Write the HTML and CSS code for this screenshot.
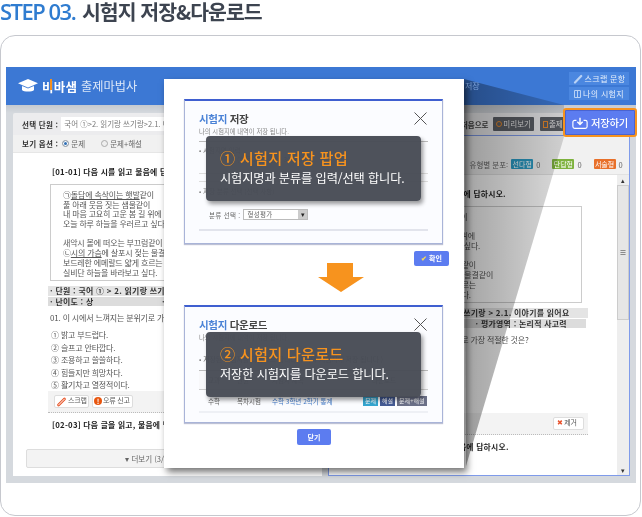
FILE: index.html
```html
<!DOCTYPE html>
<html lang="ko">
<head>
<meta charset="utf-8">
<title>STEP 03</title>
<link rel="stylesheet" href="styles.css">
</head>
<body>
<h1 class="step"><span class="step-no">STEP 03.</span> <span class="step-name">시험지 저장&amp;다운로드</span></h1>
<section class="card">
  <div class="app">
    <header class="app-head">
      <div class="brand">
        <svg class="cap" viewBox="0 0 20 15" width="20" height="15"><path d="M10 0 20 4.200 16 6v5c-1.500 2-10.500 2-12 0V6L0 4.200z" fill="#fff"/><path d="M4 6.500 10 9l6-2.500" fill="none" stroke="#3c78d4" stroke-width=".9"/></svg>
        <span class="brand-a"><span class="brand-v">비</span>바샘</span>
        <span class="brand-b">출제마법사</span>
      </div>
      <div class="head-links">
        <a class="head-link"><svg width="10" height="10" viewBox="0 0 10 10"><path d="M2 8.500 8.200 2" stroke="#b9d2f5" stroke-width="2.200" stroke-linecap="round"/></svg>스크랩 문항</a>
        <a class="head-link"><svg width="7" height="8" viewBox="0 0 7 8"><path d="M.5.5h6v7h-6zM3.500.5v7" fill="none" stroke="#b9d2f5"/></svg>나의 시험지</a>
      </div>
    </header>
    <div class="work">
      <div class="toolbar">
        <b class="tool-label">선택 단원 :</b>
        <span class="unit-input">국어 ①&gt;2. 읽기랑 쓰기랑&gt;2.1. 이야기를 읽어요</span>
        <span class="tool-actions">
          <span class="tool-first">· 처음으로</span>
          <span class="tool-btn"><i class="glass"></i>미리보기</span>
          <span class="tool-btn"><i class="book"></i>출제 정보</span>
        </span>
      </div>
      <div class="panels">
        <div class="panel panel-left">
          <div class="panel-bar options">
            <b class="tool-label">보기 옵션 :</b>
            <span class="radio"><i class="dot on"></i>문제</span>
            <span class="radio"><i class="dot"></i>문제+해설</span>
          </div>
          <div class="scroll">
            <article class="paper">
              <p class="q-head">[01-01] 다음 시를 읽고 물음에 답하시오.</p>
              <div class="passage">
                <p>㉠<u>돌담에 속삭이는 햇발</u>같이</p>
                <p>풀 아래 웃음 짓는 샘물같이</p>
                <p>내 마음 고요히 고운 봄 길 위에</p>
                <p class="stanza">오늘 하루 하늘을 우러르고 싶다.</p>
                <p>새악시 볼에 떠오는 부끄럼같이</p>
                <p>㉡<u>시의 가슴</u>에 살포시 젖는 물결같이</p>
                <p>보드레한 에메랄드 얇게 흐르는</p>
                <p>실비단 하늘을 바라보고 싶다.</p>
              </div>
              <p class="meta">· 단원 : 국어 ① &gt; 2. 읽기랑 쓰기랑 &gt; 2.1. 이야기를 읽어요</p>
              <p class="meta meta-b">· 난이도 : 상 <span class="meta-r">· 평가영역 : 논리적 사고력</span></p>
              <p class="question">01. 이 시에서 느껴지는 분위기로 가장 적절한 것은?</p>
              <ol class="choices">
                <li>① 밝고 부드럽다.</li>
                <li>② 슬프고 안타깝다.</li>
                <li>③ 조용하고 쓸쓸하다.</li>
                <li>④ 힘들지만 희망차다.</li>
                <li>⑤ 활기차고 열정적이다.</li>
              </ol>
              <div class="band">
                <span class="mini-btn mini-scrap"><svg width="11" height="11" viewBox="0 0 11 11"><path d="M2.500 9 8.500 3" stroke="#e8562a" stroke-width="2.800" stroke-linecap="round"/><path d="M2.500 9 8.500 3" stroke="#fff" stroke-width="1" stroke-linecap="round"/></svg>스크랩</span>
                <span class="mini-btn mini-err"><i class="alert">!</i>오류 신고</span>
                <span class="mini-btn mini-x"><i class="x">✖</i>제거</span>
              </div>
              <p class="q-head q-next">[02-03] 다음 글을 읽고, 물음에 답하시오.</p>
            </article>
          </div>
          <div class="more">▾ 더보기 (3/10)</div>
        </div>
        <div class="panel panel-right">
          <div class="panel-bar dist">
            <span>유형별 분포:</span>
            <span class="count"><i class="tag tag-a">선다형</i>0</span>
            <span class="count"><i class="tag tag-b">단답형</i>0</span>
            <span class="count"><i class="tag tag-c">서술형</i>0</span>
          </div>
          <div class="scroller">
            <article class="paper">
              <p class="q-head">[01-01] 다음 시를 읽고 물음에 답하시오.</p>
              <div class="passage">
                <p>㉠<u>돌담에 속삭이는 햇발</u>같이</p>
                <p>풀 아래 웃음 짓는 샘물같이</p>
                <p>내 마음 고요히 고운 봄 길 위에</p>
                <p class="stanza">오늘 하루 하늘을 우러르고 싶다.</p>
                <p>새악시 볼에 떠오는 부끄럼같이</p>
                <p>㉡<u>시의 가슴</u>에 살포시 젖는 물결같이</p>
                <p>보드레한 에메랄드 얇게 흐르는</p>
                <p>실비단 하늘을 바라보고 싶다.</p>
              </div>
              <p class="meta">· 단원 : 국어 ① &gt; 2. 읽기랑 쓰기랑 &gt; 2.1. 이야기를 읽어요</p>
              <p class="meta meta-b">· 난이도 : 상 <span class="meta-r">· 평가영역 : 논리적 사고력</span></p>
              <p class="question">01. 이 시에서 느껴지는 분위기로 가장 적절한 것은?</p>
              <ol class="choices">
                <li>① 밝고 부드럽다.</li>
                <li>② 슬프고 안타깝다.</li>
                <li>③ 조용하고 쓸쓸하다.</li>
                <li>④ 힘들지만 희망차다.</li>
                <li>⑤ 활기차고 열정적이다.</li>
              </ol>
              <div class="band">
                <span class="mini-btn mini-scrap"><svg width="11" height="11" viewBox="0 0 11 11"><path d="M2.500 9 8.500 3" stroke="#e8562a" stroke-width="2.800" stroke-linecap="round"/></svg>스크랩</span>
                <span class="mini-btn mini-err"><i class="alert">!</i>오류 신고</span>
                <span class="mini-btn mini-x"><i class="x">✖</i>제거</span>
              </div>
              <p class="q-head q-next">[02-03] 다음 글을 읽고, 물음에 답하시오.</p>
            </article>
            <div class="scrollbar">
              <span class="sb-arrow">▴</span>
              <span class="sb-thumb">≡</span>
              <span class="sb-arrow sb-down">▾</span>
            </div>
          </div>
        </div>
      </div>
    </div>

    <svg class="wedge" width="630" height="416" viewBox="0 0 630 416">
      <defs>
        <linearGradient id="wedge-fill" x1="0" x2="1" y1="0" y2="0">
          <stop offset="0" stop-color="#000" stop-opacity=".36"/>
          <stop offset="1" stop-color="#000" stop-opacity=".14"/>
        </linearGradient>
      </defs>
      <polygon points="458,12 558,38 558,70 460,399" fill="url(#wedge-fill)"/>
    </svg>
    <span class="ghost-save">저장</span>

    <button class="save-btn">
      <svg width="16" height="12" viewBox="0 0 18 13"><path d="M5 3.500H3a2 2 0 0 0-2 2v5a2 2 0 0 0 2 2h12a2 2 0 0 0 2-2v-5a2 2 0 0 0-2-2h-2" fill="none" stroke="#fff" stroke-width="1.300"/><path d="M9 .5v7M6 5l3 3.200L12 5" fill="none" stroke="#fff" stroke-width="1.600"/></svg>
      저장하기
    </button>

    <div class="popup">
      <div class="dialog dialog-save">
        <h2 class="dlg-title"><span class="accent">시험지</span> 저장</h2>
        <p class="dlg-sub">나의 시험지에 내역이 저장 됩니다.</p>
        <svg class="dlg-close" width="13" height="13" viewBox="0 0 13 13"><path d="M.5.5l12 12M12.500.5l-12 12" stroke="#555" stroke-width="1"/></svg>
        <div class="form-block">
          <p class="form-row">• 시험지명 입력</p>
          <p class="form-hint">(한글 20자, 영문 30자 이내)</p>
        </div>
        <div class="form-block form-second">
          <p class="form-row">• 저장 분류 선택 (선택 사항)</p>
          <div class="select-row">
            <span>분류 선택 :</span>
            <span class="select">형성평가<i class="select-arrow">▾</i></span>
          </div>
        </div>
        <div class="tip tip-one">
          <p class="tip-title">① 시험지 저장 팝업</p>
          <p class="tip-text">시험지명과 분류를 입력/선택 합니다.</p>
        </div>
      </div>
      <span class="blue-btn btn-ok"><i class="check">✔</i>확인</span>
      <svg class="arrow" width="46" height="29" viewBox="0 0 46 29"><path d="M9 0h26v14h11L23 29 0 14h9z" fill="#f7931e"/></svg>
      <div class="dialog dialog-down">
        <h2 class="dlg-title"><span class="accent">시험지</span> 다운로드</h2>
        <p class="dlg-sub">나의 시험지에 내역이 저장 됩니다.</p>
        <svg class="dlg-close" width="13" height="13" viewBox="0 0 13 13"><path d="M.5.5l12 12M12.500.5l-12 12" stroke="#555" stroke-width="1"/></svg>
        <p class="down-note">• 저장된 시험지를 다운로드 합니다. ( 나의 시험지에 저장 됩니다 )</p>
        <div class="down-head"><span class="c1">교과</span><span class="c2">단원</span><span class="c3">시험지 제목</span><span class="c4">다운로드</span></div>
        <div class="down-row">
          <span class="c1">수학</span><span class="c2">목차시험</span><span class="c3 link">수학 3학년 2학기 통계</span>
          <span class="badges"><i class="badge b1">문제</i><i class="badge b2">해설</i><i class="badge b3">문제+해설</i></span>
        </div>
        <div class="tip tip-two">
          <p class="tip-title">② 시험지 다운로드</p>
          <p class="tip-text">저장한 시험지를 다운로드 합니다.</p>
        </div>
      </div>
      <span class="blue-btn btn-close">닫기</span>
    </div>
  </div>
</section>
</body>
</html>
```

FILE: styles.css
```css
* { box-sizing: border-box; }
html, body { margin: 0; padding: 0; }
body {
  width: 642px; height: 517px; overflow: hidden; background: #fff;
  font-family: "Noto Sans CJK KR", "Noto Sans", sans-serif; color: #333;
}
p, h1, h2, ol { margin: 0; padding: 0; font-weight: normal; }
i { font-style: normal; }
ol { list-style: none; }

.step { height: 35px; padding-top: 0; font-size: 20.500px; line-height: 23px; white-space: nowrap; letter-spacing: -1px; font-weight: 700; filter: blur(.3px); }
.step-no { font-family: "Open Sans", sans-serif; font-weight: 600; color: #2f7cd0; font-size: 22px; letter-spacing: -1.500px; }
.step-name { color: #3d4450; margin-left: 2px; }

.card {
  width: 641px; height: 481px; border: 1px solid #c6c8ce; border-radius: 15px;
  padding: 31px 0 0 5px;
}
.app { position: relative; width: 630px; height: 416px; filter: blur(.4px); display: flex; flex-direction: column; }

.app-head {
  height: 38px; flex: none; background: #3c78d4; display: flex; align-items: center;
  justify-content: space-between; padding: 0 7px 0 12px;
}
.brand { display: flex; align-items: center; gap: 3px; color: #fff; }
.cap { margin-right: 1px; }
.brand-a { font-size: 12.500px; font-weight: 700; letter-spacing: .2px; }
.brand-v { position: relative; }
.brand-v::after { content: ""; position: absolute; left: 8px; top: 2px; width: 2px; height: 11px; background: #f39020; }
.brand-b { font-size: 12.200px; color: #dbe7f8; margin-left: 1px; }
.head-links { display: flex; flex-direction: column; gap: 2px; }
.head-link {
  width: 60px; height: 13px; background: #4b87e0; color: #e6effb; font-size: 8px; line-height: 13px;
  display: flex; align-items: center; justify-content: center; gap: 2px; letter-spacing: .3px;
}

.work { flex: 1; background: linear-gradient(#c4c9d0, #d5d9de 8px); padding: 8px 6px 7px 7px; display: flex; flex-direction: column; min-height: 0; }
.toolbar {
  height: 22px; flex: none; display: flex; align-items: center; background: #ececee; padding: 0 9px;
  border-radius: 2px 2px 0 0; font-size: 7.500px; white-space: nowrap;
}
.tool-label { font-weight: 700; color: #333; letter-spacing: .3px; }
.unit-input { width: 240px; height: 14px; background: #fff; margin-left: 3px; padding-left: 3px; line-height: 14px; color: #777; overflow: hidden; }
.tool-actions { margin-left: 155px; display: flex; align-items: center; gap: 6px; }
.tool-first { width: 31px; font-weight: 700; color: #444; }
.tool-btn { height: 14px; padding: 0 3px; background: #5b5f66; color: #e6e6e6; line-height: 14px; display: flex; align-items: center; gap: 1px; border-radius: 1px; }
.glass { width: 6px; height: 6px; border: 1.300px solid #e98a2c; border-radius: 50%; }
.book { width: 5px; height: 7px; border: 1px solid #e98a2c; }

.panels { flex: 1; display: flex; gap: 6px; min-height: 0; }
.panel { position: relative; background: #fff; display: flex; flex-direction: column; min-width: 0; overflow: hidden; }
.panel-left { width: 309px; }
.panel-right { width: 303px; border: 1px solid #7f9bea; }
.panel-bar { flex: none; background: #f1f1f1; font-size: 7.500px; display: flex; align-items: center; }
.options { height: 18px; padding-left: 9px; gap: 4px; border-bottom: 1px solid #e6e6e6; }
.radio { display: flex; align-items: center; gap: 2px; color: #666; margin-right: 12px; }
.dot { width: 7px; height: 7px; border: 1px solid #aaa; border-radius: 50%; background: #eee; }
.dot.on { background: #2f6fb5; box-shadow: inset 0 0 0 1px #fff; }

.scroll { flex: 1; min-height: 0; overflow: hidden; }
.paper { width: 226px; font-size: 8px; line-height: 9.700px; letter-spacing: -.18px; color: #555; flex: none; white-space: nowrap; }
.panel-left .paper { margin-left: 35px; }
.panel-right .paper { margin-left: 33px; }
.q-head { padding: 14px 0 0 4px; height: 31px; color: #222; font-weight: 700; font-size: 7.800px; letter-spacing: .25px; }
.passage { width: 218px; height: 97px; margin-left: 2px; border: 1px solid #ccc; padding: 5px 12px; overflow: hidden; }
.stanza { margin-bottom: 9.600px; }
.meta { height: 10px; margin-top: 5px; background: #e4e4e4; font-weight: 700; color: #333; font-size: 7.900px; line-height: 10px; letter-spacing: .3px; padding-left: 2px; overflow: hidden; }
.meta-b { margin-top: 1px; height: 9px; line-height: 9px; background: #dcdcdc; width: 224px; }
.meta-r { margin-left: 66px; }
.question { margin-top: 6px; height: 12px; line-height: 12px; padding-left: 2px; }
.choices { margin-top: 5px; padding-left: 3px; }
.choices li { height: 12.500px; line-height: 12.500px; }
.band { height: 22px; margin-top: -1px; background: #f3f3f3; border-bottom: 1px dotted #bbb; display: flex; align-items: center; padding: 0 4px 0 6px; gap: 3px; }
.mini-btn { height: 13px; background: #fff; border: 1px solid #ddd; border-radius: 2px; display: flex; align-items: center; gap: 1px; padding: 0 1px; font-size: 7px; letter-spacing: -.2px; color: #555; }
.mini-scrap { width: 35px; }
.mini-err { width: 41px; }
.mini-x { margin-left: auto; width: 31px; gap: 2px; padding-left: 3px; }
.alert { width: 8px; height: 8px; border-radius: 50%; background: #e8560f; color: #fff; font-size: 7px; line-height: 8px; text-align: center; font-weight: 700; }
.x { color: #e8502a; font-size: 7px; }
.q-next { padding-top: 7px; height: 20px; }
.more { position: absolute; left: 13px; bottom: 8px; width: 280px; height: 19px; background: #f3f3f3; border: 1px solid #ddd; border-radius: 2px; font-size: 7.500px; line-height: 17px; text-align: center; color: #666; padding-right: 32px; }

.dist { height: 39px; padding: 18px 0 0 141px; gap: 4px; color: #666; border-bottom: 1px solid #e2e2e2; }
.count { display: flex; align-items: center; gap: 3px; margin-left: 8px; }
.dist .count:nth-child(2) { margin-left: -1px; }
.tag { width: 22px; height: 10px; color: #fff; font-size: 7px; line-height: 10px; text-align: center; border-radius: 1px; }
.tag-a { background: #2b9bc4; }
.tag-b { background: #7eb23e; }
.tag-c { background: #e8702a; }
.scroller { flex: 1; display: flex; min-height: 0; overflow: hidden; justify-content: space-between; }
.scrollbar { width: 12px; flex: none; background: #eee; display: flex; flex-direction: column; font-size: 7px; color: #333; text-align: center; }
.sb-arrow { height: 10px; line-height: 10px; }
.sb-thumb { height: 135px; background: #e6e6e6; border: 1px solid #ccc; line-height: 133px; }
.sb-down { margin-top: auto; }

.wedge { position: absolute; left: 0; top: 0; }
.ghost-save { position: absolute; left: 459px; top: 13px; font-size: 8px; color: #7fa4dc; }

.save-btn {
  position: absolute; left: 557px; top: 41px; width: 74px; height: 29px;
  border: 2px solid #f7931e; border-radius: 3px; background: #5c7cf0; box-shadow: inset 0 0 0 1px #4a63d0;
  color: #fff; font: 500 10.300px "Noto Sans CJK KR", sans-serif; letter-spacing: -.2px;
  display: flex; align-items: center; justify-content: center; gap: 3px; padding: 0;
}

.popup {
  position: absolute; left: 158px; top: 12px; width: 300px; height: 389px; background: #fff;
  box-shadow: 3px 4px 7px rgba(0,0,0,.55); padding: 20px; display: flex; flex-direction: column;
}
.dialog { position: relative; width: 259px; flex: none; background: #fbfcff; border: 1px solid #a9b4d8; border-top: 2px solid #3f5fd0; padding: 0 14px; box-shadow: 0 1px 1px rgba(90,100,150,.4); }
.dialog-save { height: 145px; }
.dialog-down { height: 118px; }
.dlg-title { margin-top: 10px; font-size: 10.500px; line-height: 16px; font-weight: 700; color: #444; letter-spacing: -.3px; }
.accent { color: #4a82d6; }
.dlg-sub { font-size: 6.300px; line-height: 9px; color: #888; }
.dlg-close { position: absolute; right: 15px; top: 11px; }
.form-block { margin-top: 5px; border-top: 1px solid #bbb; height: 33px; border-bottom: 1px solid #ddd; font-size: 6.500px; color: #777; padding-top: 4px; }
.form-row { line-height: 9px; }
.form-hint { padding-left: 38px; line-height: 9px; }
.form-second { margin-top: 7px; height: 50px; border-top: 1px solid #ddd; border-bottom: 2px solid #e2e4ec; padding-top: 5px; }
.select-row { margin: 13px 0 0 10px; display: flex; align-items: center; gap: 3px; color: #666; letter-spacing: .3px; }
.select { width: 65px; height: 11px; background: #fff; border: 1px solid #bbb; line-height: 9px; padding-left: 3px; position: relative; }
.select-arrow { position: absolute; right: 0; top: 0; width: 9px; height: 9px; background: #ccc; color: #222; font-size: 7px; text-align: center; }

.tip { position: absolute; left: 21px; width: 215px; height: 65px; background: rgba(72,76,86,.97); border-radius: 4px; box-shadow: 2px 3px 4px rgba(0,0,0,.4); padding: 11px 14px 0; white-space: nowrap; }
.tip-one { top: 35px; }
.tip-two { top: 25px; }
.tip-title { color: #f7931e; font-size: 15.200px; line-height: 20px; font-weight: 500; letter-spacing: .2px; }
.tip-text { color: #fff; font-size: 12.200px; line-height: 17px; margin-top: 3px; letter-spacing: -.1px; }

.blue-btn { flex: none; height: 15px; background: #5c7cf0; color: #fff; border-radius: 2px; font-size: 7px; font-weight: 700; line-height: 15px; text-align: center; }
.btn-ok { width: 35px; margin: 7px 0 0 230px; }
.check { color: #f5d85a; margin-right: 2px; }
.arrow { flex: none; margin: -3px 0 13px 134px; }
.btn-close { width: 34px; height: 16px; margin: 6px 0 0 113px; line-height: 16px; }

.down-note { margin-top: 12px; font-size: 6.800px; color: #666; line-height: 10px; white-space: nowrap; }
.down-head, .down-row { display: flex; align-items: center; font-size: 6.500px; color: #666; white-space: nowrap; }
.down-head { height: 20px; margin-top: 6px; border-top: 1px solid #bbb; border-bottom: 1px solid #ccc; background: #f8f8fa; }
.down-row { height: 23px; border-bottom: 2px solid #eef0f5; }
.c1 { width: 28px; padding-left: 9px; box-sizing: content-box; }
.c2 { width: 36px; padding-left: 1px; }
.c3 { width: 100px; }
.link { color: #3f78c8; width: 90px; }
.badges { display: flex; gap: 2px; margin-left: 1px; }
.badge { height: 10px; line-height: 10px; color: #fff; font-size: 6px; text-align: center; padding: 0 2px; }
.b1 { background: #35a5cf; }
.b2 { background: #445a94; }
.b3 { background: #6b7088; }
```
